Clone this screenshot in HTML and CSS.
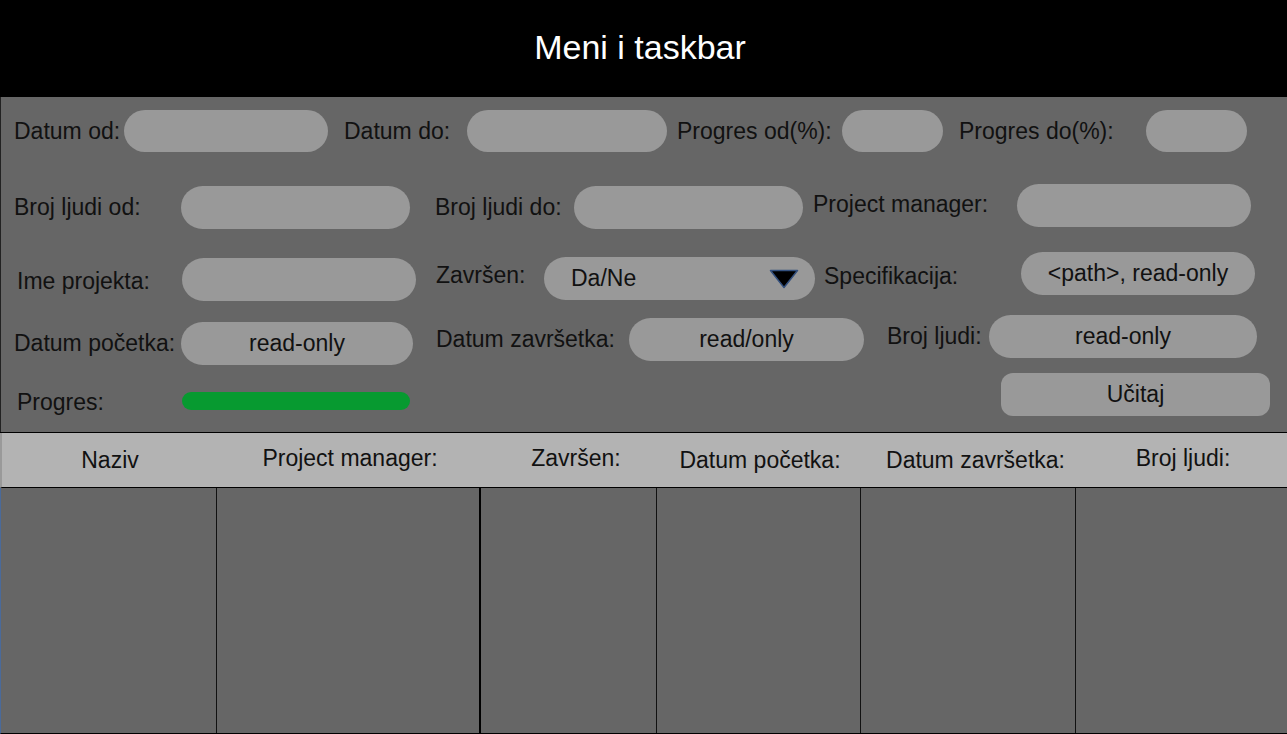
FILE: index.html
```html
<!DOCTYPE html>
<html lang="hr">
<head>
<meta charset="utf-8">
<title>Meni i taskbar</title>
<link rel="stylesheet" href="styles.css">
</head>
<body>
<header class="topbar">Meni i taskbar</header>
<section class="panel">
  <div class="row r1">
    <span class="lbl">Datum od:</span>
    <div class="inp"></div>
    <span class="lbl">Datum do:</span>
    <div class="inp"></div>
    <span class="lbl">Progres od(%):</span>
    <div class="inp"></div>
    <span class="lbl">Progres do(%):</span>
    <div class="inp"></div>
  </div>
  <div class="row r2">
    <span class="lbl">Broj ljudi od:</span>
    <div class="inp"></div>
    <span class="lbl">Broj ljudi do:</span>
    <div class="inp"></div>
    <span class="lbl">Project manager:</span>
    <div class="inp"></div>
  </div>
  <div class="row r3">
    <span class="lbl">Ime projekta:</span>
    <div class="inp"></div>
    <span class="lbl">Završen:</span>
    <div class="inp select"><span>Da/Ne</span>
      <svg class="caret" width="30" height="20" viewBox="0 0 30 20"><polygon points="1.5,1.5 28.5,1.5 15,18.5" fill="#000" stroke="#33507e" stroke-width="1.5" stroke-linejoin="round"/></svg>
    </div>
    <span class="lbl">Specifikacija:</span>
    <div class="inp">&lt;path&gt;, read-only</div>
  </div>
  <div class="row r4">
    <span class="lbl">Datum početka:</span>
    <div class="inp">read-only</div>
    <span class="lbl">Datum završetka:</span>
    <div class="inp">read/only</div>
    <span class="lbl">Broj ljudi:</span>
    <div class="inp">read-only</div>
  </div>
  <div class="row r5">
    <span class="lbl">Progres:</span>
    <div class="bar"></div>
    <span class="spacer"></span>
    <div class="btn">Učitaj</div>
  </div>
</section>
<section class="table">
  <div class="thead">
    <div class="th">Naziv</div>
    <div class="th up">Project manager:</div>
    <div class="th up">Završen:</div>
    <div class="th">Datum početka:</div>
    <div class="th">Datum završetka:</div>
    <div class="th up">Broj ljudi:</div>
  </div>
  <div class="tbody">
    <div class="td"></div>
    <div class="td thick"></div>
    <div class="td"></div>
    <div class="td"></div>
    <div class="td"></div>
    <div class="td last"></div>
  </div>
</section>
</body>
</html>
```
FILE: styles.css
```css
* { box-sizing: border-box; }
html, body { margin: 0; padding: 0; }
body {
  width: 1287px;
  height: 734px;
  overflow: hidden;
  background: #666666;
  font-family: "Liberation Sans", Arial, sans-serif;
  color: #111111;
}
.topbar {
  height: 97px;
  background: #000000;
  color: #ffffff;
  font-size: 34px;
  display: flex;
  align-items: center;
  justify-content: center;
  padding-right: 7px;
  padding-bottom: 2px;
}
.panel {
  height: 335px;
  background: #666666;
  border-left: 1px solid #222222;
  padding-top: 13px;
}
.row {
  display: grid;
  grid-template-rows: 43px;
  height: 43px;
  align-items: start;
  font-size: 23px;
}
.lbl {
  height: 43px;
  line-height: 43px;
  white-space: nowrap;
}
.inp {
  height: 43px;
  border-radius: 22px;
  background: #999999;
  display: flex;
  align-items: center;
  justify-content: center;
  white-space: nowrap;
}
/* row 1 */
.r1 { height: 42px; grid-template-rows: 42px; padding-left: 13px; grid-template-columns: 110px 204px 139px 200px 175px 101px 203px 101px; }
.r1 .inp { height: 42px; border-radius: 21px; }
.r1 .lbl { line-height: 42px; height: 42px; }
.r1 .lbl:nth-child(3), .r1 .lbl:nth-child(7) { padding-left: 16px; }
.r1 .lbl:nth-child(5) { padding-left: 10px; }
/* row 2 */
.r2 { margin-top: 32px; padding-left: 13px; grid-template-columns: 167px 229px 164px 229px 214px 234px; }
.r2 .lbl:nth-child(1), .r2 .inp:nth-child(2), .r2 .lbl:nth-child(3), .r2 .inp:nth-child(4) { margin-top: 2px; }
.r2 .lbl:nth-child(3) { padding-left: 25px; }
.r2 .lbl:nth-child(5) { padding-left: 10px; margin-top: -1px; }
/* row 3 */
.r3 { margin-top: 25px; padding-left: 15px; grid-template-columns: 166px 234px 128px 271px 206px 234px; }
.r3 .lbl:nth-child(1) { padding-left: 1px; margin-top: 8px; }
.r3 .inp:nth-child(2) { margin-top: 6px; }
.r3 .lbl:nth-child(3) { padding-left: 20px; margin-top: 2px; }
.r3 .select { margin-top: 5px; justify-content: space-between; padding-left: 27px; padding-right: 16px; }
.r3 .lbl:nth-child(5) { padding-left: 9px; margin-top: 3px; }
.caret { display: block; margin-top: 1px; }
/* row 4 */
.r4 { margin-top: 20px; padding-left: 13px; grid-template-columns: 167px 232px 216px 235px 125px 268px; }
.r4 .lbl:nth-child(1), .r4 .inp:nth-child(2) { margin-top: 7px; }
.r4 .lbl:nth-child(3), .r4 .inp:nth-child(4) { margin-top: 3px; }
.r4 .lbl:nth-child(3) { padding-left: 23px; }
.r4 .lbl:nth-child(5) { padding-left: 23px; }
/* row 5 */
.r5 { margin-top: 15px; padding-left: 15px; grid-template-columns: 166px 228px 591px 269px; }
.r5 .lbl { margin-top: 8px; padding-left: 1px; }
.bar {
  margin-top: 19px;
  height: 18px;
  border-radius: 9px;
  background: #079a30;
}
.btn {
  height: 43px;
  border-radius: 12px;
  background: #999999;
  display: flex;
  align-items: center;
  justify-content: center;
}
/* table */
.table {
  border-top: 1px solid #000000;
}
.thead {
  display: grid;
  grid-template-columns: 216px 264px 176px 204px 215px 212px;
  height: 55px;
  background: #b3b3b3;
  border-left: 2px solid #999999;
  border-bottom: 1px solid #000000;
  font-size: 23px;
}
.th {
  display: flex;
  align-items: center;
  justify-content: center;
  padding-top: 1px;
  white-space: nowrap;
}
.th.up { padding-top: 0; padding-bottom: 4px; }
.th:nth-child(3) { padding-left: 12px; }
.th:nth-child(5) { padding-left: 12px; }
.tbody {
  display: grid;
  grid-template-columns: 216px 264px 176px 204px 215px 212px;
  height: 246px;
  background: #666666;
  border-left: 1px solid #4a6a9a;
  border-bottom: 1px solid #000000;
}
.td { border-right: 1px solid #111111; }
.td.thick { border-right: 2px solid #000000; }
.td.last { border-right: none; }
```
